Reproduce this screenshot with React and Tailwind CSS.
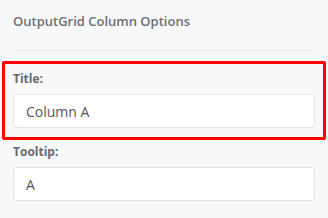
import React from 'react';

function Field({ label, value }) {
  return (
    <div>
      <label className="block text-[12px] font-bold leading-[16px] text-[#666a70] mb-[7px]">{label}</label>
      <input
        type="text"
        readOnly
        value={value}
        className="block w-full h-[34px] px-[12px] rounded-[4px] border border-[#dfe2e6] bg-white text-[14px] text-[#555] outline-none"
        style={{ fontFamily: '"Open Sans", sans-serif' }}
      />
    </div>
  );
}

export default function App() {
  return (
    <div
      className="w-[328px] h-[218px] overflow-hidden bg-[#f7f8fa] px-[13px] pt-[12px]"
      style={{ fontFamily: '"Open Sans", sans-serif' }}
    >
      {/* Header */}
      <h2 className="text-[13px] font-semibold leading-[18px] text-[#6d6f73]">OutputGrid Column Options</h2>
      <div className="mt-[20px] h-px bg-[#e7e9ec]" />

      {/* Highlighted field */}
      <div className="mt-[10px] -mx-[11px] border-[3px] border-[#ff0000] rounded-[2px] px-[8px] pt-[7px] pb-[9px]">
        <Field label="Title:" value="Column A" />
      </div>

      <div className="mt-[4px]">
        <Field label="Tooltip:" value="A" />
      </div>
    </div>
  );
}
